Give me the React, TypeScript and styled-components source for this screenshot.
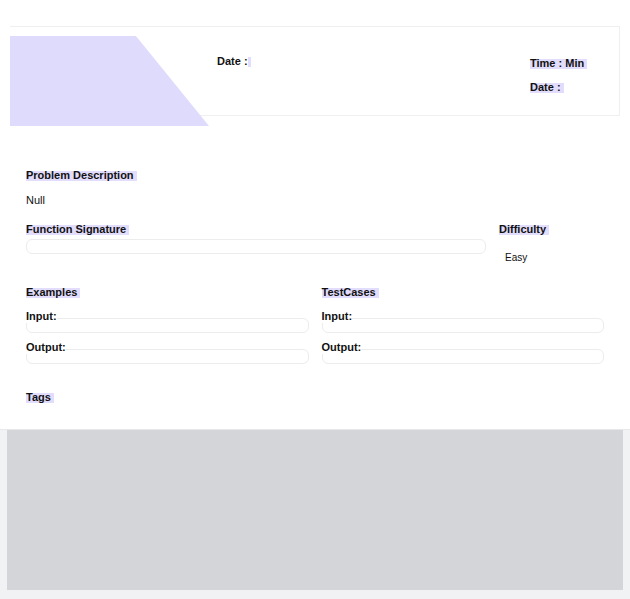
import React from "react";
import styled, { createGlobalStyle } from "styled-components";

const Global = createGlobalStyle`
  html, body { margin: 0; padding: 0; background: #fff; }
  body { font-family: "Liberation Sans", Arial, sans-serif; color: #111; }
  * { box-sizing: border-box; }
`;

const Page = styled.div`
  width: 630px;
  padding-top: 26px;
`;

const HeaderCard = styled.header`
  margin: 0 10px;
  height: 90px;
  border: 1px solid #efefef;
  border-left: none;
  display: flex;
  align-items: flex-start;
`;

const Banner = styled.div`
  flex: none;
  width: 199px;
  height: 90px;
  margin-top: 9px;
  background: #dfdbfd;
  clip-path: polygon(0 0, 63.3% 0, 100% 100%, 0 100%);
`;

const HeaderLeft = styled.div`
  padding-left: 8px;
  padding-top: 28px;
`;

const HeaderRight = styled.div`
  margin-left: auto;
  width: 89px;
  padding-top: 30px;
  display: flex;
  flex-direction: column;
  gap: 11px;
`;

const Label = styled.div`
  font-size: 11px;
  font-weight: 700;
  line-height: 13px;
`;

const Mark = styled.span<{ $pad?: number }>`
  background: linear-gradient(
    to bottom,
    transparent 2px,
    #e2ddfd 2px,
    #e2ddfd 12px,
    transparent 12px
  );
  padding-right: ${(p) => p.$pad ?? 3}px;
`;

const Main = styled.main`
  padding: 53px 26px 0;
`;

const Text = styled.div`
  font-size: 11px;
  line-height: 13px;
  margin-top: 12px;
`;

const SigRow = styled.div`
  margin-top: 16px;
  display: grid;
  grid-template-columns: 460px 1fr;
  column-gap: 13px;
`;

const Field = styled.div`
  height: 15px;
  border: 1px solid #ececec;
  border-radius: 6px;
  background: transparent;
`;

const SigField = styled(Field)`
  margin-top: 3px;
`;

const Small = styled.div`
  font-size: 10px;
  line-height: 12px;
  padding-left: 6px;
  margin-top: 16px;
`;

const Columns = styled.div`
  margin-top: 22px;
  display: grid;
  grid-template-columns: 1fr 1fr;
  column-gap: 13px;
`;

const Col = styled.div`
  display: flex;
  flex-direction: column;
`;

const FieldLabel = styled.div<{ $gap: number }>`
  position: relative;
  z-index: 1;
  align-self: flex-start;
  background: #fff;
  font-size: 11px;
  font-weight: 700;
  line-height: 13px;
  margin-top: ${(p) => p.$gap}px;
  margin-bottom: -5px;
`;

const Tags = styled(Label)`
  margin-top: 27px;
`;

const Footer = styled.footer`
  margin-top: 25px;
  border-top: 1px solid #e8e8e8;
  background: #f1f2f4;
  padding: 0 7px 9px;
`;

const Pane = styled.div`
  height: 160px;
  background: #d4d5d8;
`;

function LabeledField({ label, gap }: { label: string; gap: number }) {
  return (
    <>
      <FieldLabel $gap={gap}>{label}</FieldLabel>
      <Field />
    </>
  );
}

export default function App() {
  return (
    <>
      <Global />
      <Page>
        <HeaderCard>
          <Banner />
          <HeaderLeft>
            <Label>
              Date :<Mark $pad={3}> </Mark>
            </Label>
          </HeaderLeft>
          <HeaderRight>
            <Label>
              <Mark>Time : Min</Mark>
            </Label>
            <Label>
              <Mark>Date :</Mark>
            </Label>
          </HeaderRight>
        </HeaderCard>
        <Main>
          <Label>
            <Mark>Problem Description</Mark>
          </Label>
          <Text>Null</Text>
          <SigRow>
            <div>
              <Label>
                <Mark>Function Signature</Mark>
              </Label>
              <SigField />
            </div>
            <div>
              <Label>
                <Mark>Difficulty</Mark>
              </Label>
              <Small>Easy</Small>
            </div>
          </SigRow>
          <Columns>
            <Col>
              <Label>
                <Mark>Examples</Mark>
              </Label>
              <LabeledField label="Input:" gap={11} />
              <LabeledField label="Output:" gap={8} />
            </Col>
            <Col>
              <Label>
                <Mark>TestCases</Mark>
              </Label>
              <LabeledField label="Input:" gap={11} />
              <LabeledField label="Output:" gap={8} />
            </Col>
          </Columns>
          <Tags>
            <Mark>Tags</Mark>
          </Tags>
        </Main>
        <Footer>
          <Pane />
        </Footer>
      </Page>
    </>
  );
}
